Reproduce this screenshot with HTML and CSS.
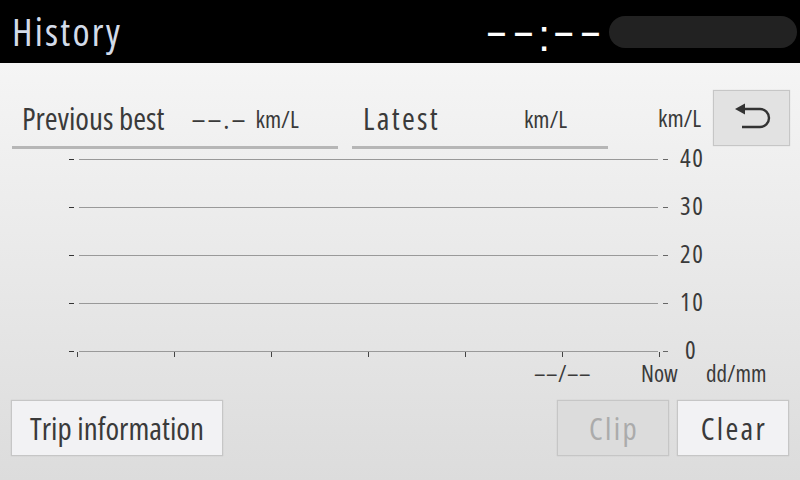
FILE: index.html
```html
<!DOCTYPE html>
<html>
<head>
<meta charset="utf-8">
<link rel="stylesheet" href="styles.css">
</head>
<body>
<div class="screen">
  <header class="header">
    <div class="title">History</div>
    <div class="clock"><span class="dash d1">–</span><span class="dash d2">–</span><span class="colon">:</span><span class="dash d3">–</span><span class="dash">–</span></div>
    <div class="pill"></div>
  </header>
  <main class="main">
    <div class="top-row">
      <div class="stat prev">
        <span class="label">Previous best</span>
        <span class="value">––.–</span>
        <span class="unit">km/L</span>
      </div>
      <div class="stat latest">
        <span class="label wide">Latest</span>
        <span class="unit">km/L</span>
      </div>
      <span class="unit axis-unit">km/L</span>
      <button class="btn back-btn" aria-label="Back">
        <svg width="38" height="28" viewBox="0 0 38 28">
          <polygon points="1,7 11,1.5 11,12.5" fill="#333"/>
          <path d="M10 7 H26 A9 9 0 0 1 26 25 H8" fill="none" stroke="#333" stroke-width="2.4"/>
        </svg>
      </button>
    </div>
    <svg class="chart" width="800" height="244" viewBox="0 0 800 244">
      <g stroke="#999" stroke-width="1">
        <line x1="79" y1="10.5" x2="658" y2="10.5"/>
        <line x1="79" y1="58.5" x2="658" y2="58.5"/>
        <line x1="79" y1="106.5" x2="658" y2="106.5"/>
        <line x1="79" y1="154.5" x2="658" y2="154.5"/>
        <line x1="79" y1="202.5" x2="658" y2="202.5"/>
      </g>
      <g stroke="#333" stroke-width="1">
        <line x1="69" y1="10.5" x2="74" y2="10.5"/>
        <line x1="69" y1="58.5" x2="74" y2="58.5"/>
        <line x1="69" y1="106.5" x2="74" y2="106.5"/>
        <line x1="69" y1="154.5" x2="74" y2="154.5"/>
        <line x1="69" y1="202.5" x2="74" y2="202.5"/>
      </g>
      <g stroke="#666" stroke-width="1">
        <line x1="663" y1="10.5" x2="668" y2="10.5"/>
        <line x1="663" y1="58.5" x2="668" y2="58.5"/>
        <line x1="663" y1="106.5" x2="668" y2="106.5"/>
        <line x1="663" y1="154.5" x2="668" y2="154.5"/>
        <line x1="663" y1="202.5" x2="668" y2="202.5"/>
      </g>
      <g stroke="#444" stroke-width="1">
        <line x1="77.5" y1="203" x2="77.5" y2="208"/>
        <line x1="174.5" y1="203" x2="174.5" y2="208"/>
        <line x1="271.5" y1="203" x2="271.5" y2="208"/>
        <line x1="368.5" y1="203" x2="368.5" y2="208"/>
        <line x1="465.5" y1="203" x2="465.5" y2="208"/>
        <line x1="562.5" y1="203" x2="562.5" y2="208"/>
        <line x1="659.5" y1="203" x2="659.5" y2="208"/>
      </g>
      <g class="axis-num">
        <text x="680" y="18">40</text>
        <text x="680" y="66">30</text>
        <text x="680" y="114">20</text>
        <text x="680" y="162">10</text>
        <text x="685" y="210">0</text>
      </g>
      <g class="axis-text">
        <text x="534" y="233" class="date">––/––</text>
        <text x="641" y="233">Now</text>
        <text x="706" y="233">dd/mm</text>
      </g>
    </svg>
    <div class="bottom-row">
      <button class="btn trip">Trip information</button>
      <button class="btn clip wide" disabled>Clip</button>
      <button class="btn clear wide">Clear</button>
    </div>
  </main>
</div>
</body>
</html>
```
FILE: styles.css
```css
html, body {
  margin: 0;
  padding: 0;
  background: #000;
}
.screen {
  width: 800px;
  height: 480px;
  overflow: hidden;
  font-family: "Open Sans", "Noto Sans", sans-serif;
  font-stretch: 75%;
  font-weight: 400;
  color: #3a3a3a;
}
.wide {
  letter-spacing: 2.3px;
}
.header {
  height: 63px;
  background: #000;
  display: flex;
  align-items: center;
  padding: 0 3px 0 12px;
}
.title {
  flex: 1;
  font-size: 39px;
  letter-spacing: 2.2px;
  color: #d3dbe9;
  line-height: 1;
  margin-top: -2px;
}
.clock {
  align-self: flex-start;
  margin-top: 14px;
  margin-right: 9px;
  font-family: "Liberation Sans", sans-serif;
  font-stretch: normal;
  font-size: 44px;
  line-height: 44px;
  height: 44px;
  color: #fff;
  white-space: nowrap;
}
.clock .dash {
  font-size: 34px;
  font-weight: bold;
  line-height: 1;
  vertical-align: 8px;
}
.clock .d1 {
  margin-right: 8px;
}
.clock .d2 {
  margin-right: 5px;
}
.clock .colon {
  margin-right: 4px;
}
.clock .d3 {
  margin-right: 8px;
}
.pill {
  width: 188px;
  height: 32px;
  border-radius: 16px;
  background: #222;
}
.main {
  height: 417px;
  background: linear-gradient(#f5f5f5, #dcdcdc);
  display: flex;
  flex-direction: column;
}
.top-row {
  display: flex;
  align-items: flex-start;
  margin-top: 27px;
  padding-left: 12px;
  height: 59px;
}
.stat {
  height: 56px;
  border-bottom: 3px solid #b6b6b6;
  display: flex;
  align-items: center;
  box-sizing: content-box;
}
.prev {
  width: 316px;
  padding-left: 10px;
}
.latest {
  width: 245px;
  padding-left: 11px;
  margin-left: 14px;
}
.label {
  font-size: 31px;
}
.prev .value {
  font-size: 28px;
  margin-left: 27px;
  letter-spacing: 2px;
}
.unit {
  font-size: 24px;
}
.prev .unit {
  margin-left: 8px;
}
.latest .unit {
  margin-left: 86px;
}
.latest .label.wide {
  margin-right: -2px;
}
.axis-unit {
  margin-left: 50px;
  line-height: 56px;
}
.btn {
  font-family: inherit;
  font-stretch: 75%;
  font-weight: 400;
  color: #3a3a3a;
  background: #f2f2f4;
  border: 1px solid #c6c6c6;
  box-shadow: 0 0 1px rgba(0,0,0,0.15);
  padding: 0;
  margin: 0;
  height: 56px;
  font-size: 31px;
}
.btn.wide {
  letter-spacing: 2.3px;
  text-indent: 2px;
}
.back-btn {
  width: 77px;
  margin-left: 12px;
  background: #e2e2e2;
  display: flex;
  align-items: center;
  justify-content: center;
}
.back-btn svg {
  margin-top: -4px;
  margin-left: 3px;
}
.chart {
  display: block;
  overflow: visible;
}
.axis-num text {
  font-size: 25px;
  letter-spacing: 1.5px;
  fill: #3a3a3a;
}
.axis-text text {
  font-size: 23px;
  fill: #3a3a3a;
}
.axis-text .date {
  letter-spacing: 0.5px;
}
.bottom-row {
  display: flex;
  margin-top: 7px;
  padding: 0 11px;
}
.trip {
  width: 212px;
}
.clip {
  width: 112px;
  margin-left: auto;
  background: #dcdcdc;
  color: #ababab;
}
.clear {
  width: 112px;
  margin-left: 8px;
}
```
